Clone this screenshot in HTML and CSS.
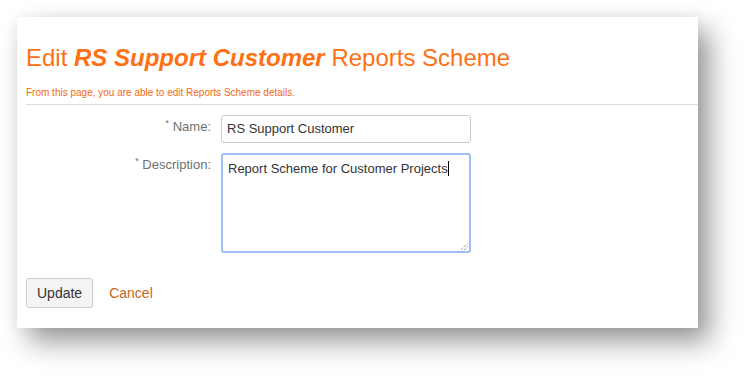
FILE: index.html
```html
<!DOCTYPE html>
<html lang="en">

<head>
  <meta charset="UTF-8">
  <title>Edit Reports Scheme</title>
  <link rel="stylesheet" href="styles.css">
</head>

<body class="rs-body">

  <!-- Panel -->
  <div class="rs-panel">
    <h1 class="rs-title">Edit <em>RS Support Customer</em> Reports Scheme</h1>
    <p class="rs-subtitle">From this page, you are able to edit Reports Scheme details.</p>

    <form class="rs-form">
      <div class="rs-row">
        <label class="rs-label"><sup>*</sup> Name:</label>
        <div class="rs-input">RS Support Customer</div>
      </div>
      <div class="rs-row">
        <label class="rs-label"><sup>*</sup> Description:</label>
        <div class="rs-textarea">Report Scheme for Customer Projects<span class="rs-caret"></span>
          <svg class="rs-grip" width="8" height="8" viewBox="0 0 8 8">
            <path d="M1 8 L8 1 M4 8 L8 4" stroke="#777" stroke-width="1" stroke-dasharray="1 1" fill="none" />
          </svg>
        </div>
      </div>

      <div class="rs-buttons">
        <button type="button" class="rs-btn">Update</button>
        <a class="rs-cancel" href="#">Cancel</a>
      </div>
    </form>
  </div>

</body>

</html>
```

FILE: styles.css
```css
/* Fondo */
.rs-body {
  margin: 0;
  padding: 17px 48px 48px 17px;
  background: #fff;
  font-family: 'Liberation Sans', Arial, sans-serif;
}

/* Panel con sombra */
.rs-panel {
  width: 672px;
  height: 284px;
  padding: 27px 0 0 9px;
  background: #fff;
  box-shadow: 0 0 14px rgba(0, 0, 0, 0.06), 12px 14px 26px rgba(0, 0, 0, 0.4);
}

.rs-title {
  margin: 0;
  font-size: 24px;
  line-height: 28px;
  font-weight: normal;
  color: #ff7012;
}

.rs-title em {
  font-weight: bold;
}

.rs-subtitle {
  margin: 15px 0 0 0;
  padding-bottom: 5px;
  font-size: 10px;
  line-height: 12px;
  color: #f26a10;
  border-bottom: 1px solid #dcdcdc;
}

/* Formulario */
.rs-form {
  padding-top: 10px;
}

.rs-row {
  display: flex;
  gap: 10px;
  margin-bottom: 10px;
}

.rs-label {
  width: 185px;
  text-align: right;
  padding-top: 4px;
  font-size: 13px;
  line-height: 16px;
  color: #707070;
}

.rs-label sup {
  font-size: 9px;
  vertical-align: 5px;
  line-height: 0;
}

.rs-input {
  width: 238px;
  height: 26px;
  padding: 0 5px;
  border: 1px solid #ccc;
  border-radius: 3px;
  font-size: 13px;
  line-height: 26px;
  color: #333;
}

.rs-textarea {
  position: relative;
  width: 236px;
  height: 87px;
  padding: 5px 5px 4px 5px;
  border: 2px solid #9dbff4;
  border-radius: 3px;
  font-size: 13px;
  line-height: 18px;
  color: #333;
}

.rs-caret {
  display: inline-block;
  width: 1px;
  height: 15px;
  background: #000;
  vertical-align: -3px;
}

.rs-grip {
  position: absolute;
  right: 1px;
  bottom: 1px;
}

/* Botones */
.rs-buttons {
  display: flex;
  align-items: center;
  gap: 16px;
  margin-top: 25px;
}

.rs-btn {
  height: 30px;
  padding: 0 10px;
  background: #f4f4f4;
  border: 1px solid #ccc;
  border-radius: 3px;
  font-family: 'Liberation Sans', Arial, sans-serif;
  font-size: 14px;
  color: #333;
  cursor: pointer;
}

.rs-cancel {
  font-size: 14px;
  color: #c8661a;
  text-decoration: none;
}
```
